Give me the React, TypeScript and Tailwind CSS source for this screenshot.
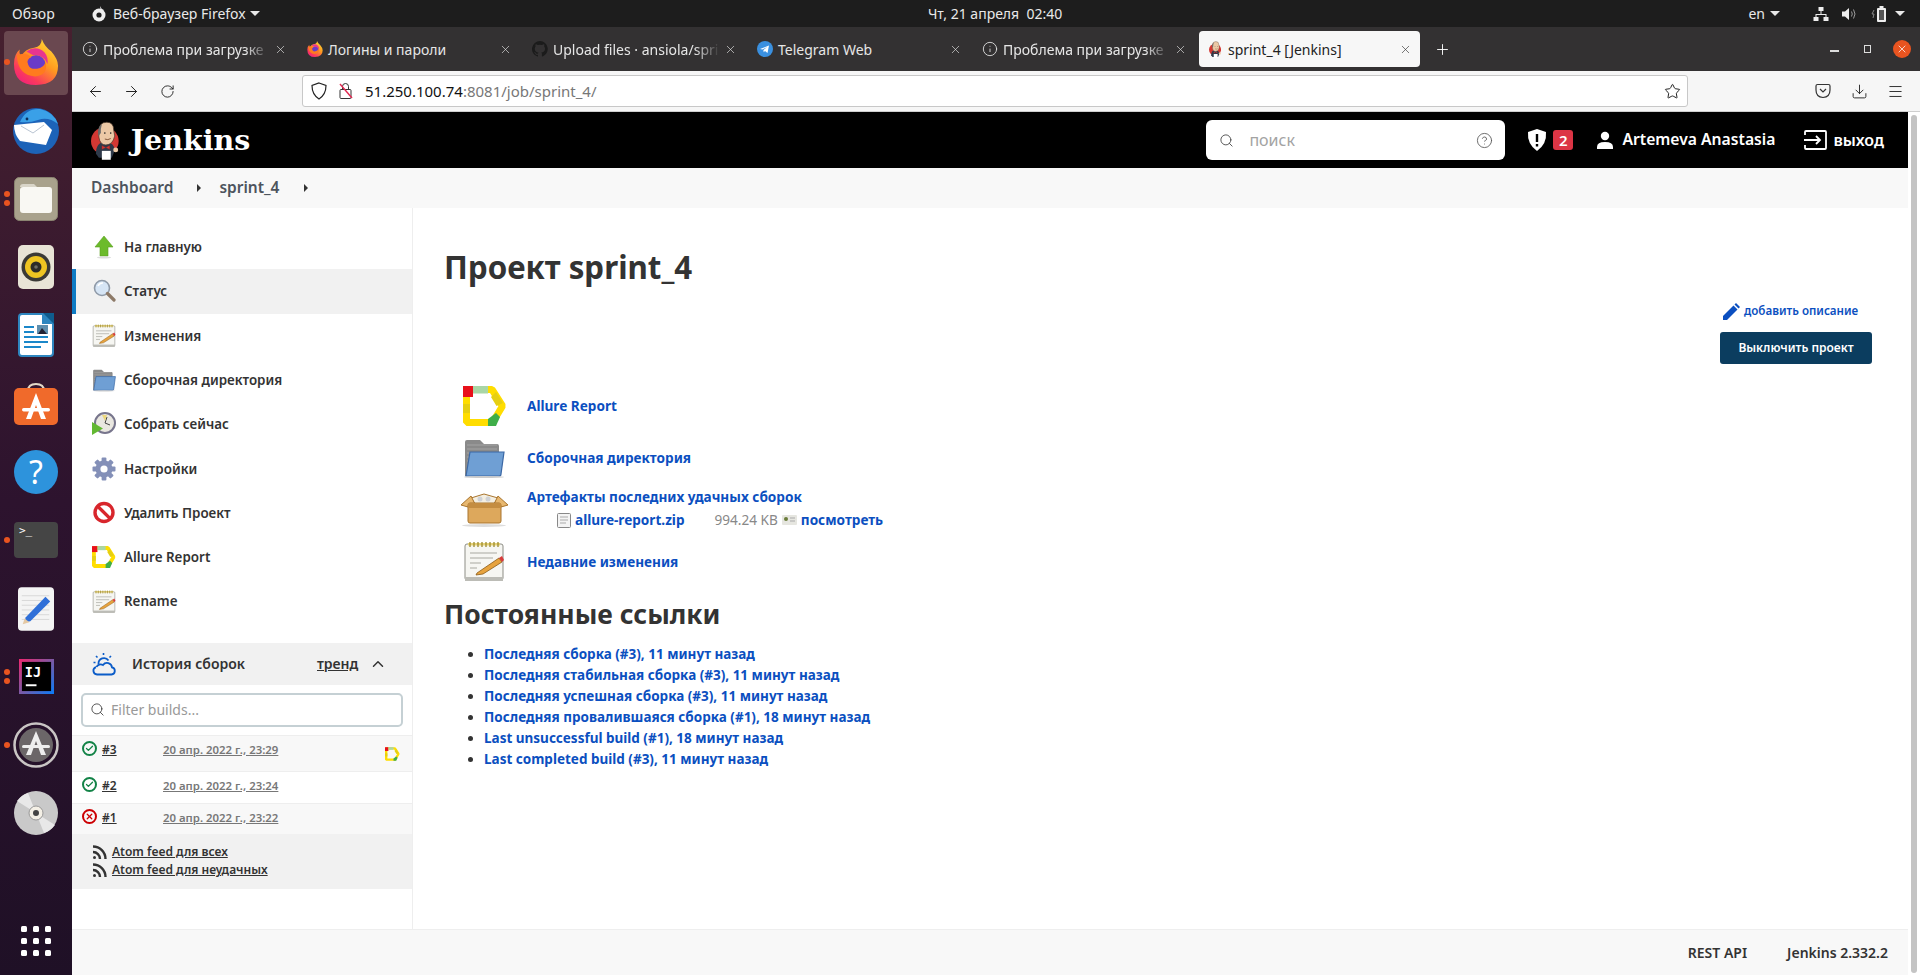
import React from "react";
import { ArrowLeft, ArrowRight, RotateCw, Star, Download, Menu, X, Plus, Search, CircleHelp, Info, ChevronUp, Check } from "lucide-react";

const Allure = ({ w = 44, h = 40 }: { w?: number; h?: number }) => (
  <svg width={w} height={h} viewBox="0 0 44 40" className="shrink-0">
    <path d="M3.500 3.500H29L39.500 20 29.500 36.500H3.500Z" fill="none" stroke="#ffdd00" strokeWidth="7" strokeLinejoin="bevel" />
    <rect x="0" y="0" width="10" height="11" fill="#e8101a" />
    <rect x="10" y="0" width="15" height="7.500" fill="#a9d6a6" />
    <path d="M33 6 40 17 33.500 20 28 11Z" fill="#e6cf12" />
    <rect x="0" y="18" width="7" height="9" fill="#e6cf12" />
    <path d="M25 33 33 27 37 31 33 40H25Z" fill="#3fae49" />
  </svg>
);

const Folder = ({ s = 24 }: { s?: number }) => (
  <svg width={s} height={s} viewBox="0 0 42 40" className="shrink-0">
    <path d="M2 38V4q0-2 2-2h13l4 4h13q2 0 2 2v6L10 38Z" fill="#8a8a8a" />
    <path d="M4 7H34M4 11H34M4 15H30M4 19H24M4 23H18" stroke="#a4a4a4" strokeWidth="1" />
    <path d="M7 14H41L38 36q0 2-2 2H3Z" fill="#6f9fd4" stroke="#3b68a5" strokeWidth="1.200" />
    <ellipse cx="21" cy="39" rx="20" ry="1" fill="#ccc" />
  </svg>
);

const Notepad = ({ s = 24 }: { s?: number }) => (
  <svg width={s} height={s} viewBox="0 0 42 42" className="shrink-0">
    <rect x="2" y="3" width="38" height="36" rx="2" fill="#f6f6f2" stroke="#8d8d85" />
    <rect x="2" y="36" width="38" height="4" fill="#bcbcb6" />
    <rect x="5" y="2" width="32" height="2.500" fill="#e6d277" />
    <path d="M7 1V6M11 1V6M15 1V6M19 1V6M23 1V6M27 1V6M31 1V6M35 1V6" stroke="#9c8a2e" strokeWidth="1.300" />
    <path d="M7 12H34M7 17H30M7 22H18M7 27H14" stroke="#a7a7a0" strokeWidth="1.200" />
    <path d="M14 32 36 17l3 4-19 12-7 1Z" fill="#e7a33e" stroke="#8a5a16" strokeWidth="0.800" />
    <path d="M36 17l3 4 2-2-2-4Z" fill="#d83a3a" />
  </svg>
);

const Magnifier = () => (
  <svg width="24" height="24" viewBox="0 0 24 24" className="shrink-0">
    <circle cx="10" cy="9" r="7.500" fill="#d6e5f5" stroke="#8f9aa8" strokeWidth="1.600" />
    <path d="M6 7a5 5 0 0 1 5-3" stroke="#fff" strokeWidth="1.600" fill="none" />
    <path d="M15.500 14.500 22 21" stroke="#8d7a68" strokeWidth="3.200" strokeLinecap="round" />
  </svg>
);

const ClockPlay = () => (
  <svg width="24" height="24" viewBox="0 0 24 24" className="shrink-0">
    <circle cx="13" cy="11" r="10" fill="#e9e7e0" stroke="#77758c" strokeWidth="2" />
    <path d="M13 11 15 5M13 11 18 13" stroke="#444" strokeWidth="1" />
    <path d="M10 3 15 3 13 9Z" fill="#ecd77c" />
    <path d="M0 10 11 16.500 0 23Z" fill="#62b832" />
  </svg>
);

const Gear = () => (
  <svg width="24" height="24" viewBox="0 0 24 24" className="shrink-0">
    <g fill="#8490b8">
      <circle cx="12" cy="12" r="8.500" />
      <rect x="9.600" y="0.500" width="4.800" height="23" rx="1" />
      <rect x="9.600" y="0.500" width="4.800" height="23" rx="1" transform="rotate(45 12 12)" />
      <rect x="9.600" y="0.500" width="4.800" height="23" rx="1" transform="rotate(90 12 12)" />
      <rect x="9.600" y="0.500" width="4.800" height="23" rx="1" transform="rotate(135 12 12)" />
    </g>
    <circle cx="12" cy="12" r="3.600" fill="#fff" />
  </svg>
);

const NoEntry = () => (
  <svg width="24" height="24" viewBox="0 0 24 24" className="shrink-0">
    <circle cx="12" cy="11.500" r="9" fill="#fff" stroke="#d8262c" strokeWidth="3.400" />
    <path d="M5.800 5.400 18.200 17.600" stroke="#d8262c" strokeWidth="3.400" />
  </svg>
);

const UpArrow = () => (
  <svg width="24" height="24" viewBox="0 0 24 24" className="shrink-0">
    <path d="M12 1 21 12H16V21H8V12H3Z" fill="#6cbb2b" stroke="#5aa020" strokeWidth="0.600" />
    <ellipse cx="12" cy="22.500" rx="7" ry="1" fill="#ddd" />
  </svg>
);

const BoxIcon = () => (
  <svg width="47" height="34" viewBox="0 0 47 34" className="shrink-0">
    <path d="M10 5 23 1 37 5 33 11H14Z" fill="#f4efe2" stroke="#a9752e" />
    <circle cx="19" cy="6" r="2.500" fill="#cfd2d6" />
    <circle cx="27" cy="6" r="2.500" fill="#cfd2d6" />
    <path d="M0 12 10 3 14 11 7 14Z M47 12 37 3 33 11 40 14Z" fill="#e8b870" stroke="#a9752e" />
    <rect x="7" y="10" width="33" height="20" rx="2" fill="#dda85c" stroke="#a9752e" />
    <rect x="7" y="10" width="33" height="5" fill="#c48d41" />
    <ellipse cx="23" cy="32.500" rx="22" ry="1.500" fill="#ddd" />
  </svg>
);

const Butler = ({ s = 39 }: { s?: number }) => (
  <svg width={s * 0.76} height={s} viewBox="0 0 30 39" className="shrink-0">
    <circle cx="14" cy="20" r="14" fill="#d33833" />
    <path d="M5 33q0-12 9-12 10 0 10 9l-3 7H8Z" fill="#2f3a4a" />
    <path d="M8 10q0-9 8-9 7 0 7 8l1 6q-2 9-9 9-6 0-7-8Z" fill="#ecc9a6" stroke="#49372a" strokeWidth="0.700" />
    <path d="M7.500 15Q6 6 11 3 9.500 8 10 12Z" fill="#6a6a6a" />
    <circle cx="14" cy="12" r="0.800" fill="#222" />
    <circle cx="20" cy="12" r="0.800" fill="#222" />
    <path d="M14 18q3 1.500 6-.5" stroke="#6b3d22" strokeWidth="0.800" fill="none" />
    <path d="M11 24.500l4 2 4-2v4l-4-2-4 2Z" fill="#d33833" stroke="#7a1a18" strokeWidth="0.300" />
    <rect x="11" y="30" width="9" height="9" fill="#fff" />
    <circle cx="25" cy="29" r="2.500" fill="#ecc9a6" />
  </svg>
);

const Firefox = ({ s = 46 }: { s?: number }) => (
  <svg width={s} height={s} viewBox="0 0 46 48" className="shrink-0">
    <defs>
      <linearGradient id="ffa" x1="0.900" y1="0" x2="0.200" y2="1">
        <stop offset="0" stopColor="#ffe23a" />
        <stop offset="0.450" stopColor="#ff9a1f" />
        <stop offset="0.800" stopColor="#fb3a5c" />
        <stop offset="1" stopColor="#f0207c" />
      </linearGradient>
    </defs>
    <path d="M29 0q3 8 10 13 7 8 7 15 0 20-23 20Q0 48 0 26 0 16 6 11q-1 5 2 7 3-8 13-9 8-1 8-9Z" fill="url(#ffa)" />
    <path d="M13 13q10-7 19 1 4 5 3 12-4-10-15-9Z" fill="#e8358f" />
    <circle cx="23" cy="27" r="10" fill="#6a3bc8" />
    <path d="M3 17q9-4 15 2-6 2-3 8 2 5 9 4 7-1 9-7 3 14-11 15Q4 38 3 17Z" fill="#ff7b1e" />
  </svg>
);

const Thunderbird = () => (
  <svg width="48" height="48" viewBox="0 0 48 48">
    <circle cx="24" cy="25" r="23" fill="#1d63b8" />
    <path d="M8 16Q14 2 28 3q14 3 18 15-10-8-20-4-8 3-18 2Z" fill="#3aa0e8" />
    <path d="M2 19l30-3 8 8-6 15-26-4Q2 28 2 19Z" fill="#fff" />
    <path d="M9 20 21 27 32 19" stroke="#b9c4d2" strokeWidth="1" fill="none" />
    <circle cx="15" cy="13" r="1.400" fill="#0d2f5c" />
  </svg>
);

const FilesApp = () => (
  <svg width="44" height="44" viewBox="0 0 44 44">
    <rect x="0.500" y="0.500" width="43" height="43" rx="5" fill="#a9a28c" stroke="#8a8471" />
    <path d="M6 10q0-3 3-3h11l3 3H6Z" fill="#d9d5c8" />
    <rect x="6" y="10" width="32" height="26" rx="3" fill="#f9f8f3" />
  </svg>
);

const Rhythmbox = () => (
  <svg width="36" height="44" viewBox="0 0 36 44">
    <rect x="0" y="0" width="36" height="44" rx="5" fill="#e8e4d6" />
    <circle cx="18" cy="22" r="14.500" fill="#3a3a36" />
    <circle cx="18" cy="22" r="11" fill="#eec522" />
    <circle cx="18" cy="22" r="5.500" fill="#2b2b28" />
    <circle cx="18" cy="22" r="1.800" fill="#6d6d66" />
  </svg>
);

const Writer = () => (
  <svg width="36" height="44" viewBox="0 0 36 44">
    <path d="M0 4q0-4 4-4h22l10 10v30q0 4-4 4H4q-4 0-4-4Z" fill="#2e86bf" />
    <path d="M2 4q0-2 2-2h20v9h10v29q0 2-2 2H4q-2 0-2-2Z" fill="#fff" />
    <path d="M6 14h10M6 19h10M6 24h24M6 29h24M6 34h17" stroke="#1b87c9" strokeWidth="2" />
    <rect x="19" y="12" width="11" height="9" fill="#5f8fae" />
    <path d="M20 21 24 15 29 21Z" fill="#223" />
    <path d="M25 0h11v11Z" fill="#0f5c8d" />
  </svg>
);

const SoftwareBag = () => (
  <svg width="44" height="42" viewBox="0 0 44 42">
    <path d="M14 8q0-7 8-7t8 7" stroke="#e2d9c9" strokeWidth="2" fill="none" />
    <rect x="0" y="5" width="44" height="37" rx="5" fill="#f06a2b" />
    <path d="M22 10 12 36h5l5-14 5 14h5Z" fill="#fff" />
    <rect x="8" y="25" width="28" height="3.500" rx="1.700" fill="#fff" />
  </svg>
);

const HelpBall = () => (
  <div className="w-[44px] h-[44px] rounded-full bg-[#2d93dc] flex items-center justify-center text-white text-[32px] font-['Noto_Sans',sans-serif] leading-none">?</div>
);

const TerminalApp = () => (
  <div className="w-[44px] h-[36px] rounded-[4px] bg-[#454545] text-white font-['DejaVu_Sans_Mono',monospace] text-[11px] leading-[16px] pl-[5px] pt-[1px]">&gt;_</div>
);

const Editor = () => (
  <svg width="36" height="44" viewBox="0 0 38 46">
    <rect x="0" y="0" width="38" height="46" rx="4" fill="#f4f4f4" />
    <path d="M4 9H33M4 14H33M4 19H33M4 24H33M4 29H33M4 34H33" stroke="#d7d7d7" />
    <path d="M8 32 29 10l5 5-21 21-6 1Z" fill="#2f6fd8" />
    <path d="M7 33l5 4-7 2Z" fill="#e4c8a3" />
  </svg>
);

const Idea = () => (
  <svg width="35" height="35" viewBox="0 0 36 36">
    <defs>
      <linearGradient id="ija" x1="0" y1="0" x2="1" y2="1">
        <stop offset="0" stopColor="#f0266f" />
        <stop offset="0.500" stopColor="#7c59a4" />
        <stop offset="1" stopColor="#087cfa" />
      </linearGradient>
    </defs>
    <rect width="36" height="36" fill="url(#ija)" />
    <rect x="3" y="3" width="30" height="30" fill="#000" />
    <rect x="7" y="26" width="11" height="2" fill="#fff" />
    <text x="6" y="19" fill="#fff" fontSize="14" fontWeight="700" fontFamily="DejaVu Sans Mono">IJ</text>
  </svg>
);

const Updater = () => (
  <svg width="46" height="46" viewBox="0 0 46 46">
    <circle cx="23" cy="23" r="21.500" fill="none" stroke="#c9c5c4" strokeWidth="2.500" />
    <circle cx="23" cy="23" r="17" fill="#6b6668" />
    <path d="M23 9 13 33h5l5-14 5 14h5Z" fill="#eee" />
    <rect x="9" y="23" width="28" height="3" rx="1.500" fill="#eee" />
  </svg>
);

const Disc = () => (
  <svg width="46" height="46" viewBox="0 0 46 46">
    <circle cx="23" cy="23" r="22" fill="#c9c9c9" />
    <path d="M23 23 4 11A22 22 0 0 1 15 3Z M23 23 42 35A22 22 0 0 1 31 43Z" fill="#e8e8e8" />
    <circle cx="23" cy="23" r="7" fill="#f4f0e6" stroke="#999" />
    <circle cx="23" cy="23" r="3" fill="#444" />
  </svg>
);

const Dock = () => {
  const apps: [React.ReactNode, number, boolean][] = [
    [<Firefox s={46} />, 1, true],
    [<Thunderbird />, 0, false],
    [<FilesApp />, 2, false],
    [<Rhythmbox />, 0, false],
    [<Writer />, 0, false],
    [<SoftwareBag />, 0, false],
    [<HelpBall />, 0, false],
    [<TerminalApp />, 1, false],
    [<Editor />, 0, false],
    [<Idea />, 2, false],
    [<Updater />, 1, false],
    [<Disc />, 0, false],
  ];
  return (
    <div className="w-[72px] h-[948px] shrink-0 flex flex-col items-center bg-gradient-to-b from-[#46202f] via-[#2d132e] to-[#1f1026] pt-[1px]">
      {apps.map(([icon, dots, active], i) => (
        <div key={i} className="relative w-[72px] h-[68.300px] flex items-center justify-center shrink-0">
          {active && <div className="absolute left-[4px] top-[3px] w-[64px] h-[64px] rounded-[4px] bg-[#6a4850]" />}
          <div className="relative flex items-center justify-center">{icon}</div>
          {dots > 0 && (
            <div className="absolute left-[4px] top-0 bottom-0 flex flex-col justify-center gap-[3px]">
              {Array.from({ length: dots }).map((_, d) => (
                <div key={d} className="w-[6px] h-[6px] rounded-full bg-[#e95420]" />
              ))}
            </div>
          )}
        </div>
      ))}
      <div className="mt-[78px] grid grid-cols-3 gap-x-[6px] gap-y-[6px]">
        {Array.from({ length: 9 }).map((_, i) => (
          <div key={i} className="w-[6px] h-[6px] rounded-[1.500px] bg-white" />
        ))}
      </div>
    </div>
  );
};

const TopBar = () => (
  <div className="h-[27px] shrink-0 bg-[#1d1d1d] text-[#e9e9e9] text-[14px] flex items-center relative font-['Noto_Sans',sans-serif]">
    <span className="ml-[12px] w-[79px]">Обзор</span>
    <svg width="16" height="16" viewBox="0 0 16 16" className="shrink-0">
      <circle cx="8" cy="9" r="6.500" fill="#eee" />
      <circle cx="8" cy="9" r="2.600" fill="#1d1d1d" />
      <path d="M9 0q1 3 4 4l-3 2Z" fill="#eee" />
    </svg>
    <span className="ml-[6px]">Веб-браузер Firefox</span>
    <span className="ml-[4px] w-0 h-0 border-x-[5px] border-x-transparent border-t-[5px] border-t-[#e9e9e9]" />
    <span className="flex-1 text-center mr-[18px]">Чт, 21 апреля&nbsp;&nbsp;02:40</span>
    <span className="ml-auto">en</span>
    <span className="ml-[5px] w-0 h-0 border-x-[5px] border-x-transparent border-t-[5px] border-t-[#e9e9e9]" />
    <svg width="16" height="16" viewBox="0 0 16 16" className="ml-[33px] shrink-0" fill="#eee">
      <rect x="5.500" y="1" width="5" height="4" />
      <rect x="0.500" y="11" width="5" height="4" />
      <rect x="10.500" y="11" width="5" height="4" />
      <path d="M7.500 5h1v3H13.500v3h-1V9h-9v2h-1V8h5Z" />
    </svg>
    <svg width="16" height="16" viewBox="0 0 16 16" className="ml-[12px] shrink-0" fill="none">
      <path d="M1 5.500H4L8 2V14L4 10.500H1Z" fill="#eee" />
      <path d="M10.500 5.500q1.500 2.500 0 5M12.500 3.500q3 4.500 0 9" stroke="#9a9a9a" strokeWidth="1" />
    </svg>
    <svg width="16" height="18" viewBox="0 0 16 18" className="ml-[14px] shrink-0">
      <path d="M3 5 1 9h2l-1 4" stroke="#888" fill="none" />
      <rect x="6" y="3" width="9" height="14" rx="1" fill="#eee" />
      <rect x="8" y="5" width="5" height="10" fill="#555" />
      <rect x="8.500" y="1" width="4" height="2" fill="#eee" />
    </svg>
    <span className="ml-[8px] mr-[15px] w-0 h-0 border-x-[5px] border-x-transparent border-t-[5px] border-t-[#e9e9e9]" />
  </div>
);

const Tab = ({ icon, title, active, fade }: { icon: React.ReactNode; title: string; active?: boolean; fade?: boolean }) => (
  <div className={`w-[221px] h-[36px] shrink-0 flex items-center pl-[8px] pr-[8px] rounded-[4px] text-[14px] ${active ? "bg-[#f7f7f7] text-[#222]" : "text-[#e6e6e6]"}`}>
    <span className="w-[16px] h-[16px] flex items-center justify-center shrink-0">{icon}</span>
    <span className={`ml-[5px] flex-1 whitespace-nowrap ${fade ? "[mask-image:linear-gradient(to_right,black_85%,transparent)]" : ""}`}>{title}</span>
    <X size={13} strokeWidth={1.200} className={`shrink-0 ml-[4px] ${active ? "text-[#333]" : "text-[#e6e6e6]"}`} />
  </div>
);

const TabBar = () => (
  <div className="h-[44px] shrink-0 bg-[#333132] flex items-center pl-[2px] gap-[4px]">
    <Tab icon={<Info size={16} strokeWidth={1.300} />} title="Проблема при загрузке" fade />
    <Tab icon={<Firefox s={16} />} title="Логины и пароли" />
    <Tab
      icon={
        <svg width="16" height="16" viewBox="0 0 16 16" fill="#1b1b1b">
          <path d="M8 0a8 8 0 0 0-2.500 15.600c.4.1.5-.2.5-.4v-1.400c-2.200.5-2.700-1-2.700-1-.4-.9-.9-1.200-.9-1.200-.7-.5.1-.5.1-.5.8.1 1.200.8 1.200.8.7 1.200 1.900.9 2.300.7.1-.5.3-.9.5-1.100-1.800-.2-3.700-.9-3.700-4 0-.9.3-1.600.8-2.100-.1-.2-.4-1 .1-2.100 0 0 .7-.2 2.200.8a7.600 7.600 0 0 1 4 0c1.500-1 2.200-.8 2.200-.8.4 1.100.2 1.900.1 2.100.5.6.8 1.300.8 2.100 0 3.100-1.900 3.700-3.700 3.900.3.300.6.700.6 1.500v2.200c0 .2.100.5.600.4A8 8 0 0 0 8 0Z" />
        </svg>
      }
      title="Upload files · ansiola/spri"
      fade
    />
    <Tab
      icon={
        <svg width="16" height="16" viewBox="0 0 16 16">
          <circle cx="8" cy="8" r="8" fill="#3a90e0" />
          <path d="M3 8l9-3.500-1.500 7.500-2.500-2-1.300 1.200-.3-2.200 3.800-3-4.800 2.500Z" fill="#fff" />
        </svg>
      }
      title="Telegram Web"
    />
    <Tab icon={<Info size={16} strokeWidth={1.300} />} title="Проблема при загрузке" fade />
    <Tab icon={<Butler s={17} />} title="sprint_4 [Jenkins]" active />
    <Plus size={17} strokeWidth={1.300} className="ml-[10px] text-white shrink-0" />
    <div className="ml-auto flex items-center">
      <div className="w-[9px] h-[1.500px] bg-[#ddd] mt-[4px]" />
      <div className="ml-[25px] w-[7px] h-[8px] border border-[#ddd]" />
      <div className="ml-[22px] mr-[9px] w-[18px] h-[18px] rounded-full bg-[#e95420] flex items-center justify-center">
        <X size={12} strokeWidth={1.500} className="text-white" />
      </div>
    </div>
  </div>
);

const Toolbar = () => (
  <div className="h-[41px] shrink-0 bg-[#f6f6f6] border-b border-b-[#cfcfcf] flex items-center text-[#222] font-['Noto_Sans',sans-serif]">
    <ArrowLeft size={17} strokeWidth={1.400} className="ml-[15px]" />
    <ArrowRight size={17} strokeWidth={1.400} className="ml-[19px]" />
    <RotateCw size={15} strokeWidth={1.500} className="ml-[20px]" />
    <div className="ml-[127px] w-[1386px] h-[32px] rounded-[3px] border border-[#c8c8c8] bg-white flex items-center">
      <svg width="16" height="18" viewBox="0 0 16 18" className="ml-[8px] shrink-0" fill="none" stroke="#222" strokeWidth="1.200">
        <path d="M8 1 15 3.500q0 9-7 13.500Q1 12.500 1 3.500Z" />
      </svg>
      <svg width="16" height="18" viewBox="0 0 16 18" className="ml-[11px] shrink-0" fill="none">
        <rect x="2" y="7.500" width="11" height="9" rx="1" stroke="#333" />
        <path d="M4.500 7.500V4.500a3 3 0 0 1 6 0v3" stroke="#333" />
        <path d="M2 2 14 16" stroke="#e22850" strokeWidth="1.400" />
      </svg>
      <span className="ml-[11px] text-[15px] text-[#111]">51.250.100.74<span className="text-[#777]">:8081/job/sprint_4/</span></span>
      <Star size={17} strokeWidth={1.400} className="ml-auto mr-[6px]" />
    </div>
    <svg width="16" height="16" viewBox="0 0 16 16" className="ml-[127px] shrink-0" fill="none" stroke="#333" strokeWidth="1.200">
      <path d="M2.500 1.500h11q1.500 0 1.500 1.500v4q0 7-7 7.500Q1 14 1 7V3q0-1.500 1.500-1.500Z" />
      <path d="M5 6l3 3 3-3" />
    </svg>
    <Download size={17} strokeWidth={1.300} className="ml-[20px]" />
    <Menu size={17} strokeWidth={1.300} className="ml-[19px]" />
  </div>
);

const JenkinsHeader = () => (
  <div className="h-[56px] shrink-0 bg-black flex items-center text-white pl-[19px] font-['Noto_Sans',sans-serif]">
    <Butler s={39} />
    <span className="ml-[10px] font-['DejaVu_Serif',serif] font-bold text-[28.500px] leading-none">Jenkins</span>
    <div className="ml-auto w-[299px] h-[40px] rounded-[6px] bg-white flex items-center text-[#9aa0a6]">
      <Search size={15} strokeWidth={1.400} className="ml-[13px] text-[#444]" />
      <span className="ml-[15px] text-[16px] text-[#a3a3a3]">поиск</span>
      <CircleHelp size={17} strokeWidth={1.200} className="ml-auto text-[#555] mr-[12px]" />
    </div>
    <svg width="20" height="24" viewBox="0 0 20 24" className="ml-[22px] shrink-0">
      <path d="M10 1 19 4q1 12-9 19Q0 16 1 4Z" fill="#fff" />
      <rect x="8.800" y="6" width="2.400" height="8" fill="#000" />
      <rect x="8.800" y="16" width="2.400" height="2.500" fill="#000" />
    </svg>
    <span className="ml-[6px] w-[20px] h-[20px] rounded-[3px] bg-[#dc3545] flex items-center justify-center text-[15px] font-semibold">2</span>
    <svg width="18" height="18" viewBox="0 0 18 18" className="ml-[23px] shrink-0" fill="#fff">
      <circle cx="9" cy="5" r="4.200" />
      <path d="M1 18v-2q0-5 8-5t8 5v2Z" />
    </svg>
    <span className="ml-[8px] text-[15.700px] font-semibold whitespace-nowrap">Artemeva Anastasia</span>
    <svg width="23" height="20" viewBox="0 0 23 20" className="ml-[29px] shrink-0" fill="none" stroke="#fff" strokeWidth="1.800">
      <path d="M1 5V2q0-1 1-1h19q1 0 1 1v16q0 1-1 1H2q-1 0-1-1v-3" />
      <path d="M0 10h16M12 6l4 4-4 4" />
    </svg>
    <span className="ml-[6px] mr-[24px] text-[16px] font-semibold">выход</span>
  </div>
);

const Caret = () => <span className="block w-0 h-0 border-y-[4px] border-y-transparent border-l-[4px] border-l-[#333]" />;

const Breadcrumb = () => (
  <div className="h-[40px] shrink-0 bg-[#f8f8f8] flex items-center pl-[19px] text-[15.500px] font-semibold text-[#4d545d] font-['Noto_Sans',sans-serif]">
    <span className="whitespace-nowrap">Dashboard</span>
    <span className="ml-[24px]"><Caret /></span>
    <span className="ml-[18px] whitespace-nowrap">sprint_4</span>
    <span className="ml-[25px]"><Caret /></span>
  </div>
);

const SideItem = ({ icon, label, active }: { icon: React.ReactNode; label: string; active?: boolean }) => (
  <div className={`h-[44.300px] shrink-0 flex items-center ${active ? "bg-[#f1f1f1] border-l-[4px] border-l-[#0f7bc4] pl-[16px]" : "pl-[20px]"}`}>
    {icon}
    <span className="ml-[8px] text-[13.400px] font-semibold text-[#333]">{label}</span>
  </div>
);

const CircleStatus = ({ ok }: { ok: boolean }) => (
  <span className={`w-[15px] h-[15px] rounded-full border-2 flex items-center justify-center shrink-0 ${ok ? "border-[#138347] text-[#138347]" : "border-[#cc0003] text-[#cc0003]"}`}>
    {ok ? <Check size={9} strokeWidth={3.500} /> : <X size={9} strokeWidth={3.500} />}
  </span>
);

const BuildRow = ({ n, date, ok, h, bg, allure }: { n: string; date: string; ok: boolean; h: string; bg: string; allure?: boolean }) => (
  <div className={`${h} ${bg} shrink-0 flex items-start pl-[10px] pt-[5px] border-t border-t-[#eeeeee]`}>
    <CircleStatus ok={ok} />
    <span className="ml-[5px] w-[61px] text-[12px] font-semibold underline text-[#333] leading-[17px]">{n}</span>
    <span className="text-[11.400px] font-semibold underline text-[#777] leading-[17px] whitespace-nowrap">{date}</span>
    {allure && <span className="ml-auto mr-[12px] mt-[6px]"><Allure w={15} h={14} /></span>}
  </div>
);

const Rss = () => (
  <svg width="16" height="16" viewBox="0 0 16 16" className="shrink-0" fill="none" stroke="#333" strokeWidth="2.400">
    <circle cx="2.500" cy="13.500" r="1.500" fill="#333" stroke="none" />
    <path d="M1 8a7 7 0 0 1 7 7" />
    <path d="M1 2.500A12.500 12.500 0 0 1 13.500 15" />
  </svg>
);

const Sidebar = () => (
  <div className="w-[341px] shrink-0 border-r border-r-[#eeeeee] flex flex-col pt-[17px] font-['Noto_Sans',sans-serif]">
    <SideItem icon={<UpArrow />} label="На главную" />
    <SideItem icon={<Magnifier />} label="Статус" active />
    <SideItem icon={<Notepad />} label="Изменения" />
    <SideItem icon={<Folder />} label="Сборочная директория" />
    <SideItem icon={<ClockPlay />} label="Собрать сейчас" />
    <SideItem icon={<Gear />} label="Настройки" />
    <SideItem icon={<NoEntry />} label="Удалить Проект" />
    <SideItem icon={<Allure w={24} h={22} />} label="Allure Report" />
    <SideItem icon={<Notepad />} label="Rename" />
    <div className="mt-[19px] h-[42px] shrink-0 bg-[#f1f1f1] flex items-center pl-[20px] text-[#333] font-semibold text-[14px]">
      <svg width="24" height="24" viewBox="0 0 24 24" className="shrink-0" fill="none" stroke="#0b5cc8" strokeWidth="1.800">
        <path d="M5 22.500a3.800 3.800 0 0 1-1-7.400M5 22.500h14.500a3.600 3.600 0 0 0 .5-7.100 5 5 0 0 0-9-2.400A4.500 4.500 0 0 0 4.500 15" />
        <path d="M6.500 12a5.500 5.500 0 0 1 10-3.500" />
        <path d="M11.500 1v2M4 4l1.500 1.500M19 4l-1.500 1.500M1.500 10.500h2" strokeWidth="1.600" />
      </svg>
      <span className="ml-[16px]">История сборок</span>
      <span className="ml-[72px] font-semibold underline text-[14px]">тренд</span>
      <ChevronUp size={18} strokeWidth={2} className="ml-[11px]" />
    </div>
    <div className="h-[50px] shrink-0 flex items-center pl-[9px]">
      <div className="w-[322px] h-[34px] rounded-[5px] border-2 border-[#c5d0d4] flex items-center">
        <Search size={15} strokeWidth={1.300} className="ml-[7px] text-[#333]" />
        <span className="ml-[6px] text-[14px] text-[#999]">Filter builds...</span>
      </div>
    </div>
    <BuildRow n="#3" date="20 апр. 2022 г., 23:29" ok h="h-[36px]" bg="bg-[#f8f8f8]" allure />
    <BuildRow n="#2" date="20 апр. 2022 г., 23:24" ok h="h-[32px]" bg="bg-white" />
    <BuildRow n="#1" date="20 апр. 2022 г., 23:22" ok={false} h="h-[31px]" bg="bg-[#f8f8f8]" />
    <div className="h-[55px] shrink-0 bg-[#f1f1f1] flex flex-col justify-center pl-[20px] text-[12px] font-semibold text-[#333] underline leading-[18px]">
      <div className="flex items-center"><Rss /><span className="ml-[4px]">Atom feed для всех</span></div>
      <div className="flex items-center"><Rss /><span className="ml-[4px]">Atom feed для неудачных</span></div>
    </div>
  </div>
);

const L = ({ children, className = "" }: { children: React.ReactNode; className?: string }) => (
  <span className={`font-bold text-[#0b4fc0] whitespace-nowrap ${className}`}>{children}</span>
);

const links = [
  "Последняя сборка (#3), 11 минут назад",
  "Последняя стабильная сборка (#3), 11 минут назад",
  "Последняя успешная сборка (#3), 11 минут назад",
  "Последняя провалившаяся сборка (#1), 18 минут назад",
  "Last unsuccessful build (#1), 18 минут назад",
  "Last completed build (#3), 11 минут назад",
];

const MainPane = () => (
  <div className="flex-1 pl-[31px] pr-[36px] font-['Noto_Sans',sans-serif] text-[13.600px]">
    <h1 className="mt-[39px] h-[40px] leading-[40px] text-[31.300px] font-bold text-[#333] whitespace-nowrap">Проект sprint_4</h1>
    <div className="mt-[13px] flex flex-col items-end">
      <div className="h-[22px] w-[151px] flex items-center">
        <svg width="17" height="17" viewBox="0 0 17 17" className="ml-[2px] shrink-0" fill="#0b4fc0">
          <path d="M0 17v-4L10.500 2.500l4 4L4 17Z" />
          <path d="M11.500 1.500 13 0l4 4-1.500 1.500Z" />
        </svg>
        <span className="ml-[4px] text-[11.600px] font-semibold text-[#0b4fc0] whitespace-nowrap">добавить описание</span>
      </div>
      <div className="mt-[10px] w-[152px] h-[32px] rounded-[3px] bg-[#0b3d5f] text-white text-[12px] font-semibold flex items-center justify-center whitespace-nowrap">Выключить проект</div>
    </div>
    <div className="mt-[22px] ml-[19px] flex items-center h-[40px]">
      <span className="w-[64px]"><Allure /></span>
      <L>Allure Report</L>
    </div>
    <div className="mt-[12px] ml-[19px] flex items-center h-[40px]">
      <span className="w-[64px]"><Folder s={42} /></span>
      <L>Сборочная директория</L>
    </div>
    <div className="mt-[9px] ml-[17px] flex items-start">
      <span className="w-[66px] pt-[6px]"><BoxIcon /></span>
      <div className="flex flex-col">
        <L className="leading-[20px]">Артефакты последних удачных сборок</L>
        <div className="mt-[3px] ml-[30px] flex items-center h-[20px]">
          <svg width="14" height="15" viewBox="0 0 14 15" className="shrink-0">
            <rect x="0.500" y="0.500" width="13" height="14" rx="1" fill="#f4f4f4" stroke="#888" />
            <path d="M3 4h8M3 7h8M3 10h6" stroke="#aaa" />
          </svg>
          <L className="ml-[4px]">allure-report.zip</L>
          <span className="ml-[30px] text-[#888] whitespace-nowrap">994.24 KB</span>
          <svg width="15" height="12" viewBox="0 0 15 12" className="ml-[4px] shrink-0">
            <rect x="0" y="1" width="15" height="10" rx="1" fill="#e6e6e0" />
            <circle cx="4" cy="5" r="2" fill="#6b7d3a" />
            <path d="M8 4h5M8 7h5" stroke="#aaa" />
          </svg>
          <L className="ml-[4px]">посмотреть</L>
        </div>
      </div>
    </div>
    <div className="mt-[11px] ml-[19px] flex items-center h-[42px]">
      <span className="w-[64px]"><Notepad s={42} /></span>
      <L>Недавние изменения</L>
    </div>
    <h2 className="mt-[13px] h-[36px] leading-[36px] text-[26.500px] font-bold text-[#333] whitespace-nowrap">Постоянные ссылки</h2>
    <ul className="mt-[12px] list-disc pl-[40px] text-[#333] text-[13.500px]">
      {links.map((t) => (
        <li key={t} className="h-[21px] leading-[21px]"><L>{t}</L></li>
      ))}
    </ul>
  </div>
);

const Footer = () => (
  <div className="h-[46px] shrink-0 bg-[#f8f8f8] border-t border-t-[#eeeeee] flex items-center justify-end pr-[20px] text-[14px] font-semibold text-[#333] font-['Noto_Sans',sans-serif]">
    <span>REST API</span>
    <span className="ml-[40px]">Jenkins 2.332.2</span>
  </div>
);

export default function App() {
  return (
    <div className="w-[1920px] h-[975px] overflow-hidden flex flex-col bg-white font-['Noto_Sans',sans-serif]">
      <TopBar />
      <div className="flex flex-1 min-h-0">
        <Dock />
        <div className="flex-1 min-w-0 flex flex-col">
          <TabBar />
          <Toolbar />
          <div className="flex-1 min-h-0 flex">
            <div className="flex-1 min-w-0 flex flex-col">
              <JenkinsHeader />
              <Breadcrumb />
              <div className="flex-1 min-h-0 flex">
                <Sidebar />
                <MainPane />
              </div>
              <Footer />
            </div>
            <div className="w-[12px] shrink-0 bg-white pl-[3px] pt-[3px]">
              <div className="w-[6px] h-[858px] rounded-[3px] bg-[#c4c4c4]" />
            </div>
          </div>
        </div>
      </div>
    </div>
  );
}
